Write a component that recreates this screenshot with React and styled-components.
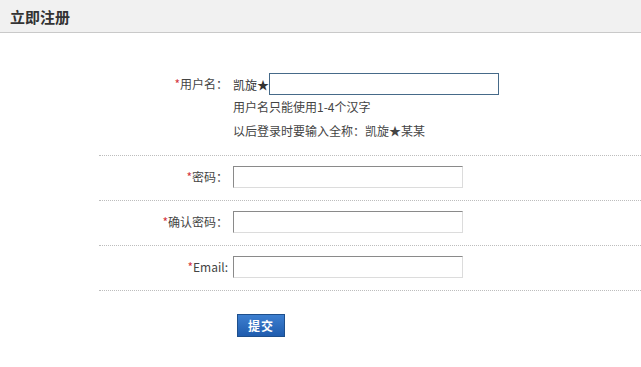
import React from 'react';
import styled, { createGlobalStyle } from 'styled-components';

const GlobalStyle = createGlobalStyle`
  body {
    margin: 0;
    background: #fff;
    font-family: "Liberation Sans", "Noto Sans CJK SC", sans-serif;
    font-size: 12px;
    color: #333;
  }
`

const Header = styled.div`
  height: 32px;
  background: #f1f1f1;
  border-bottom: 1px solid #c9c9c9;
  display: flex;
  align-items: center;
  padding-left: 10px;
  font-family: "Noto Sans CJK SC", sans-serif;
  font-size: 15px;
  font-weight: bold;
  color: #333;
`

const Form = styled.form`
  margin: 30px 0 0 99px;
`

const Row = styled.div`
  display: grid;
  grid-template-columns: 134px 1fr;
  padding: 10px 0 12px;
  border-bottom: 1px dotted #bdbdbd;
`

const Label = styled.label`
  text-align: right;
  padding-right: 5px;
  line-height: 22px;
  height: 22px;
  font-family: "Noto Sans CJK SC", sans-serif;
  color: #444;
`

const Star = styled.span`
  color: #d4353f;
`

const Field = styled.div`
  display: flex;
  flex-direction: column;
`

const InputLine = styled.div`
  display: flex;
  align-items: center;
  height: 22px;
  font-family: "Noto Sans CJK SC", sans-serif;
`

const Prefix = styled.span`
  color: #333;
`

const Input = styled.input`
  box-sizing: border-box;
  width: 230px;
  height: 22px;
  margin: 0;
  padding: 0 4px;
  font: inherit;
  outline: none;
  background: #fff;
  border: 1px solid;
  border-color: ${p => p.$active ? '#466a89' : '#8a8a8a #dcdcdc #dcdcdc #8a8a8a'};
`

const Hint = styled.div`
  line-height: 24px;
  font-family: "Noto Sans CJK SC", sans-serif;
  color: #444;
`

const Actions = styled.div`
  padding: 23px 0 0 138px;
`

const Submit = styled.button`
  width: 48px;
  height: 23px;
  padding: 0;
  border: 1px solid #1e4f8c;
  background: linear-gradient(#3d7fd0, #1f5cae);
  color: #fff;
  font-family: "Noto Sans CJK SC", sans-serif;
  font-size: 12px;
  font-weight: bold;
  letter-spacing: 1px;
`

function App() {
  return (
    <>
      <GlobalStyle />
      <Header>立即注册</Header>
      <Form onSubmit={e => e.preventDefault()}>
        <Row>
          <Label><Star>*</Star>用户名：</Label>
          <Field>
            <InputLine>
              <Prefix>凯旋★</Prefix>
              <Input $active />
            </InputLine>
            <Hint>用户名只能使用1-4个汉字</Hint>
            <Hint>以后登录时要输入全称：凯旋★某某</Hint>
          </Field>
        </Row>
        <Row>
          <Label><Star>*</Star>密码：</Label>
          <Field><Input type="password" /></Field>
        </Row>
        <Row>
          <Label><Star>*</Star>确认密码：</Label>
          <Field><Input type="password" /></Field>
        </Row>
        <Row>
          <Label><Star>*</Star>Email:</Label>
          <Field><Input /></Field>
        </Row>
        <Actions>
          <Submit type="submit">提交</Submit>
        </Actions>
      </Form>
    </>
  )
}

export default App;
